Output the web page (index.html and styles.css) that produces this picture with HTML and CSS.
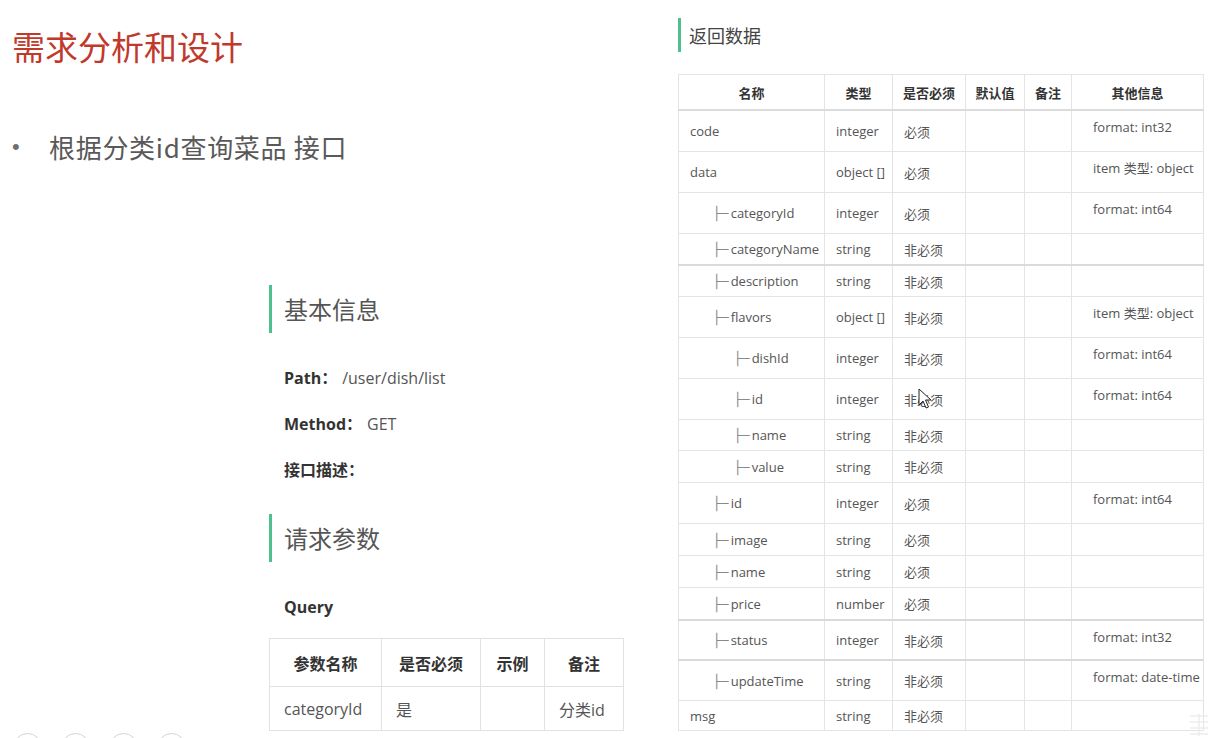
FILE: index.html
```html
<!DOCTYPE html>
<html lang="zh-CN">
<head>
<meta charset="utf-8">
<title>需求分析和设计</title>
<link rel="stylesheet" href="styles.css">
</head>
<body>
<div class="page">
  <div class="left">
    <h1 class="title">需求分析和设计</h1>
    <div class="bullet"><span class="dot">•</span><span class="btext">根据分类id查询菜品 接口</span></div>
    <div class="doc">
      <h2 class="sec">基本信息</h2>
      <p class="kv first"><b>Path：</b><span class="val">/user/dish/list</span></p>
      <p class="kv"><b>Method：</b><span class="val">GET</span></p>
      <p class="kv"><b>接口描述：</b></p>
      <h2 class="sec sec2">请求参数</h2>
      <p class="kv query"><b>Query</b></p>
      <table class="qtable">
        <colgroup><col class="qc1"><col class="qc2"><col class="qc3"><col class="qc4"></colgroup>
        <thead><tr><th>参数名称</th><th>是否必须</th><th>示例</th><th>备注</th></tr></thead>
        <tbody><tr><td>categoryId</td><td>是</td><td></td><td>分类id</td></tr></tbody>
      </table>
    </div>
  </div>
  <div class="right">
    <h2 class="rh">返回数据</h2>
    <table class="rtable">
      <colgroup><col class="c1"><col class="c2"><col class="c3"><col class="c4"><col class="c5"><col class="c6"></colgroup>
      <thead><tr><th>名称</th><th>类型</th><th>是否必须</th><th>默认值</th><th>备注</th><th>其他信息</th></tr></thead>
      <tbody>
        <tr class="h40"><td>code</td><td>integer</td><td>必须</td><td></td><td></td><td class="info"><div>format: int32</div></td></tr>
        <tr class="h40"><td>data</td><td>object []</td><td>必须</td><td></td><td></td><td class="info"><div>item 类型: object</div></td></tr>
        <tr class="h40"><td><span class="l1"><span class="tree">├─</span>categoryId</span></td><td>integer</td><td>必须</td><td></td><td></td><td class="info"><div>format: int64</div></td></tr>
        <tr class="h30"><td><span class="l1"><span class="tree">├─</span>categoryName</span></td><td>string</td><td>非必须</td><td></td><td></td><td></td></tr>
        <tr class="h30 thick"><td><span class="l1"><span class="tree">├─</span>description</span></td><td>string</td><td>非必须</td><td></td><td></td><td></td></tr>
        <tr class="h40"><td><span class="l1"><span class="tree">├─</span>flavors</span></td><td>object []</td><td>非必须</td><td></td><td></td><td class="info"><div>item 类型: object</div></td></tr>
        <tr class="h40"><td><span class="l2"><span class="tree">├─</span>dishId</span></td><td>integer</td><td>非必须</td><td></td><td></td><td class="info"><div>format: int64</div></td></tr>
        <tr class="h40"><td><span class="l2"><span class="tree">├─</span>id</span></td><td>integer</td><td>非必须</td><td></td><td></td><td class="info"><div>format: int64</div></td></tr>
        <tr class="h30"><td><span class="l2"><span class="tree">├─</span>name</span></td><td>string</td><td>非必须</td><td></td><td></td><td></td></tr>
        <tr class="h31"><td><span class="l2"><span class="tree">├─</span>value</span></td><td>string</td><td>非必须</td><td></td><td></td><td></td></tr>
        <tr class="h40"><td><span class="l1"><span class="tree">├─</span>id</span></td><td>integer</td><td>必须</td><td></td><td></td><td class="info"><div>format: int64</div></td></tr>
        <tr class="h31"><td><span class="l1"><span class="tree">├─</span>image</span></td><td>string</td><td>必须</td><td></td><td></td><td></td></tr>
        <tr class="h31"><td><span class="l1"><span class="tree">├─</span>name</span></td><td>string</td><td>必须</td><td></td><td></td><td></td></tr>
        <tr class="h31"><td><span class="l1"><span class="tree">├─</span>price</span></td><td>number</td><td>必须</td><td></td><td></td><td></td></tr>
        <tr class="h38 thick"><td><span class="l1"><span class="tree">├─</span>status</span></td><td>integer</td><td>非必须</td><td></td><td></td><td class="info"><div>format: int32</div></td></tr>
        <tr class="h39 thick"><td><span class="l1"><span class="tree">├─</span>updateTime</span></td><td>string</td><td>非必须</td><td></td><td></td><td class="info"><div>format: date-time</div></td></tr>
        <tr class="h29"><td>msg</td><td>string</td><td>非必须</td><td></td><td></td><td></td></tr>
      </tbody>
    </table>
  </div>

  <svg class="cursor" width="14" height="22" viewBox="0 0 14 22" aria-hidden="true">
    <path d="M1 1 L1 17 L5 13 L8 20 L10.5 19 L7.5 12 L13 12 Z" fill="#fff" stroke="#222" stroke-width="1" stroke-linejoin="round"/>
  </svg>

  <div class="controls">
    <span class="ctl"></span><span class="ctl"></span><span class="ctl"></span><span class="ctl"></span>
  </div>

  <svg class="corner" width="26" height="28" viewBox="0 0 26 28" aria-hidden="true">
    <g stroke="#ececec" stroke-width="1.5" fill="none">
      <path d="M4 6 H22"/>
      <path d="M4 12 H22"/>
      <path d="M4 18 H22"/>
      <path d="M4 24 H22"/>
      <path d="M13 4 V26"/>
    </g>
  </svg>
</div>
</body>
</html>
```

FILE: styles.css
```css
html, body {
  margin: 0;
  padding: 0;
  background: #ffffff;
}

body {
  font-family: "Open Sans", "Noto Sans CJK SC", sans-serif;
  color: #555;
}

.page {
  position: relative;
  display: flex;
  width: 1212px;
  height: 738px;
  overflow: hidden;
}

/* ---------- left column ---------- */
.left {
  flex: none;
  width: 678px;
}

.title {
  margin: 26px 0 0 12px;
  font-family: "Noto Sans CJK SC", sans-serif;
  font-weight: 400;
  font-size: 33px;
  line-height: 40px;
  color: #c0392b;
}

.bullet {
  display: flex;
  align-items: center;
  margin-top: 64px;
  height: 34px;
  color: #595959;
}

.dot {
  width: 37px;
  padding-left: 12px;
  font-family: "Liberation Sans", sans-serif;
  font-size: 22px;
  line-height: 34px;
  color: #707070;
}

.btext {
  font-family: "Noto Sans CJK SC", sans-serif;
  font-size: 26px;
  line-height: 34px;
  letter-spacing: 0.7px;
}

.doc {
  margin: 121px 0 0 269px;
}

.sec {
  margin: 0;
  height: 48px;
  line-height: 48px;
  border-left: 3px solid #4fc08d;
  padding-left: 12px;
  font-family: "Noto Sans CJK SC", sans-serif;
  font-weight: 400;
  font-size: 24px;
  color: #555;
}

.kv {
  margin: 22px 0 0 15px;
  font-size: 16px;
  line-height: 24px;
  color: #555;
}

.kv b {
  color: #333;
  font-weight: 700;
}

.kv .val {
  margin-left: 5px;
}

.kv.first {
  margin-top: 33px;
}

.sec2 {
  margin-top: 32px;
}

.kv.query {
  margin-top: 33px;
}

.qtable {
  margin-top: 19px;
  border-collapse: collapse;
  table-layout: fixed;
  width: 354px;
  font-size: 16px;
  color: #555;
}

.qc1 { width: 112px; }
.qc2 { width: 99px; }
.qc3 { width: 64px; }
.qc4 { width: 79px; }

.qtable th,
.qtable td {
  border: 1px solid #e2e2e2;
  padding: 0 0 0 14px;
  white-space: nowrap;
}

.qtable th {
  height: 47px;
  padding: 0;
  text-align: center;
  font-weight: 700;
  color: #333;
}

.qtable td {
  height: 43px;
}

/* ---------- right column ---------- */
.right {
  flex: none;
  width: 534px;
}

.rh {
  margin: 18px 0 0 0;
  height: 34px;
  line-height: 35px;
  border-left: 3px solid #4fc08d;
  padding-left: 8px;
  font-family: "Noto Sans CJK SC", sans-serif;
  font-weight: 400;
  font-size: 18px;
  color: #444;
}

.rtable {
  margin-top: 22px;
  border-collapse: collapse;
  table-layout: fixed;
  width: 525px;
  font-size: 13px;
  color: #555;
}

.c1 { width: 146px; }
.c2 { width: 68px; }
.c3 { width: 73px; }
.c4 { width: 59px; }
.c5 { width: 47px; }
.c6 { width: 132px; }

.rtable th,
.rtable td {
  border: 1px solid #e4e4e4;
  padding: 0 0 0 11px;
  white-space: nowrap;
  overflow: hidden;
}

.rtable th {
  height: 34px;
  padding: 0;
  text-align: center;
  font-weight: 700;
  color: #333;
  border-bottom: 2px solid #dcdcdc;
}

.rtable tr.h29 td { height: 29px; }
.rtable tr.h30 td { height: 30px; }
.rtable tr.h31 td { height: 31px; }
.rtable tr.h38 td { height: 38px; }
.rtable tr.h39 td { height: 39px; }
.rtable tr.h40 td { height: 40px; }

.rtable tr.thick td {
  border-top: 2px solid #dadada;
}

.rtable td.info {
  vertical-align: top;
  padding-left: 21px;
}

.rtable td.info div {
  padding-top: 7px;
  line-height: 18px;
}

.l1 { padding-left: 23px; }
.l2 { padding-left: 44px; }

.tree {
  font-family: "DejaVu Sans Mono", monospace;
  font-size: 13px;
  color: #888;
  margin-right: 2px;
}

/* ---------- overlays ---------- */
.cursor {
  position: absolute;
  left: 918px;
  top: 388px;
}

.controls {
  position: absolute;
  left: 13px;
  top: 733px;
  display: flex;
  gap: 19px;
}

.ctl {
  width: 27px;
  height: 27px;
  border: 1px solid #d4d4d4;
  border-radius: 50%;
}

.corner {
  position: absolute;
  left: 1186px;
  top: 710px;
}
```
